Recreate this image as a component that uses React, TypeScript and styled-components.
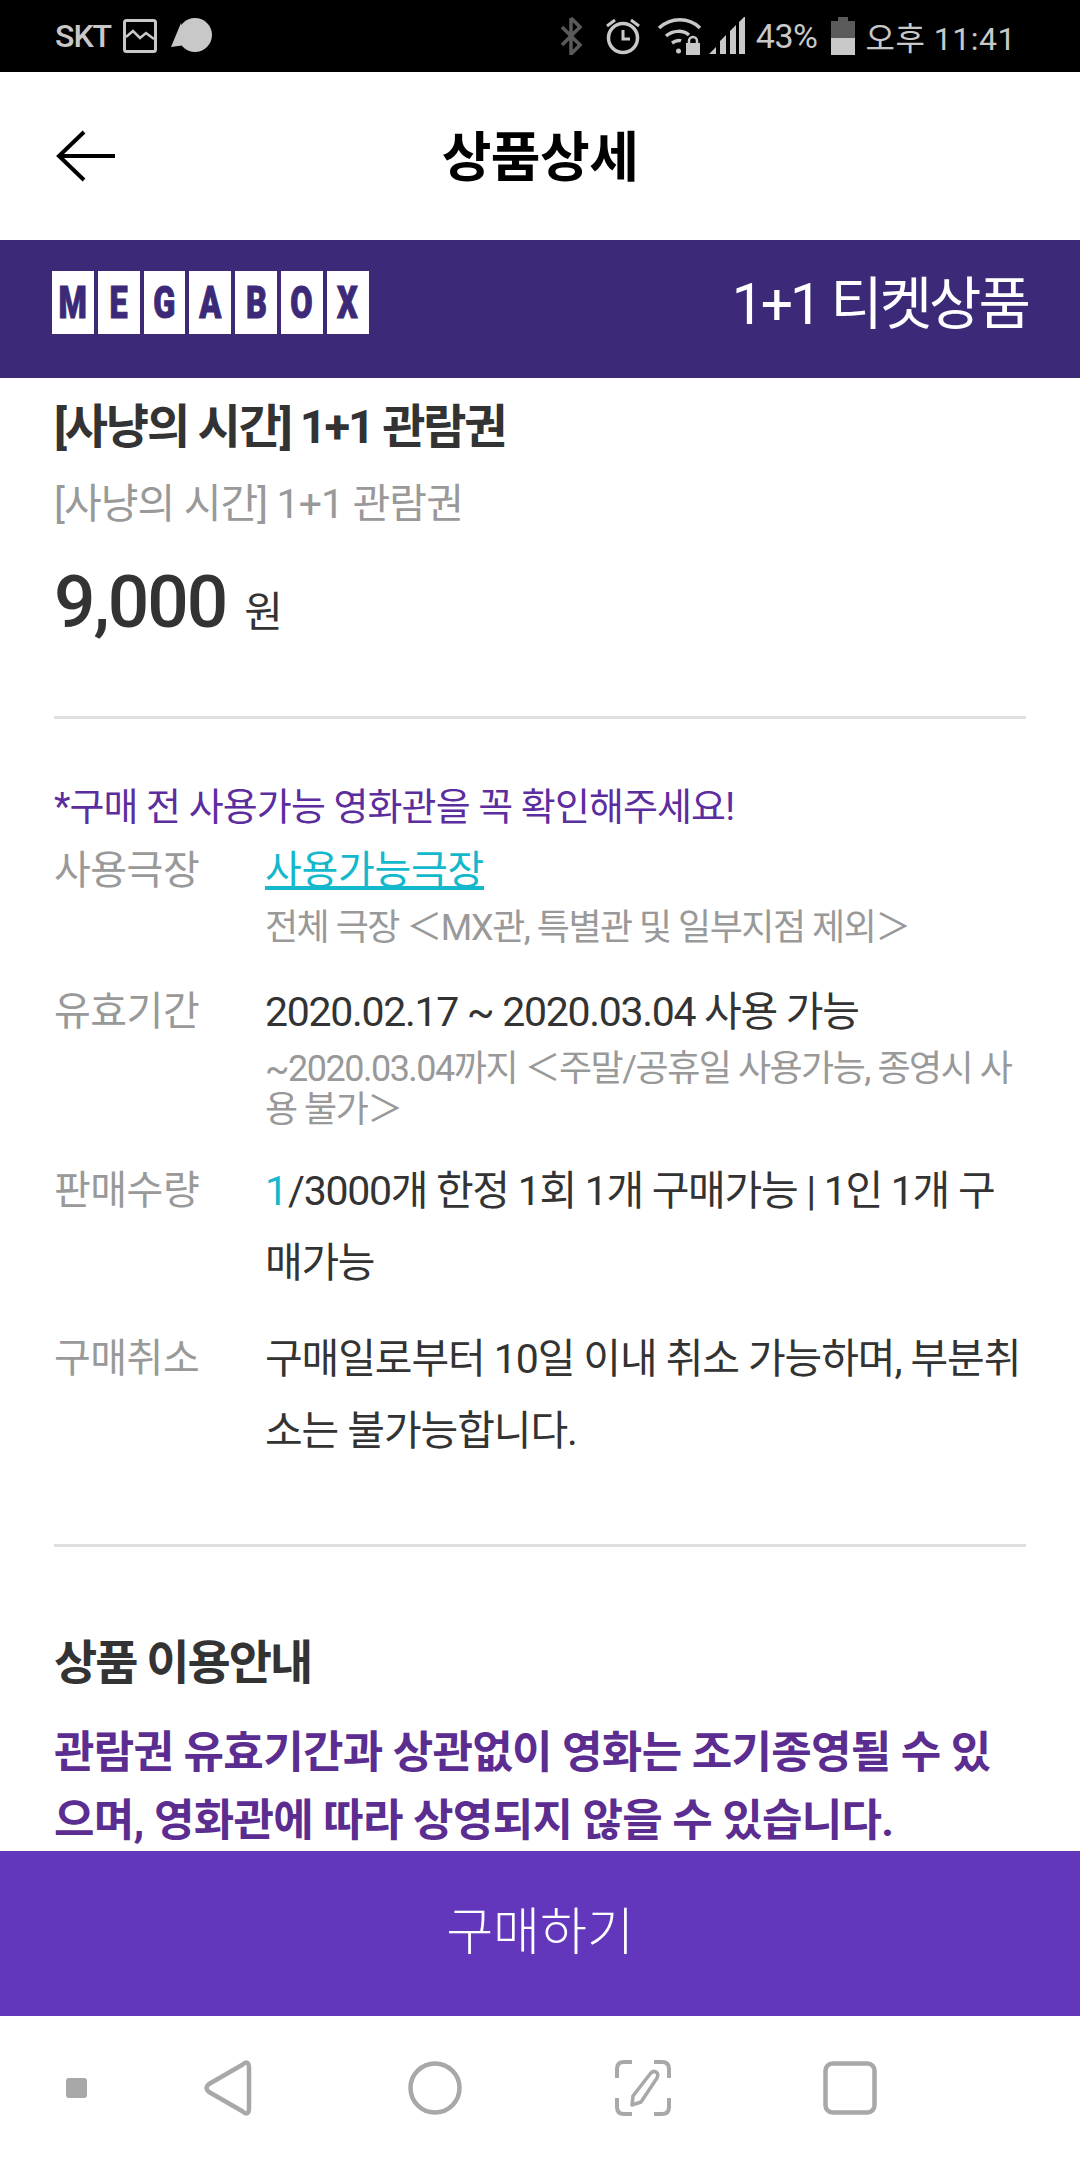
import React from "react";
import styled, { createGlobalStyle } from "styled-components";

const GlobalStyle = createGlobalStyle`
  html, body {
    margin: 0;
    padding: 0;
    background: #fff;
  }
  * {
    box-sizing: border-box;
  }
`;

const fontStack = `Roboto, "Noto Sans CJK KR", sans-serif`;
const logoLetters = ["M", "E", "G", "A", "B", "O", "X"];

function App() {
  return (
    <Screen>
      <GlobalStyle />
      <StatusBar>
        <StatusGroup>
          <StatusText>SKT</StatusText>
          <IconGap $w={12} />
          <svg width="34" height="34" viewBox="0 0 34 34" fill="none" stroke="#c8c8c8">
            <rect x="1.5" y="1.5" width="31" height="31" rx="2" strokeWidth="3" />
            <path d="M3 18l7-6 7 7 6-5 8 6" strokeWidth="2.5" />
          </svg>
          <IconGap $w={14} />
          <svg width="42" height="36" viewBox="0 0 42 36" fill="#c8c8c8">
            <circle cx="24" cy="17" r="17" />
            <path d="M10 5L0 29l15-2z" />
          </svg>
        </StatusGroup>
        <StatusGroup>
          <svg width="24" height="38" viewBox="0 0 24 38" fill="none" stroke="#5a5a5a" strokeWidth="3.5">
            <path d="M12 1v36l9-9L3 10M12 1l9 9L3 28" />
          </svg>
          <IconGap $w={22} />
          <svg width="36" height="38" viewBox="0 0 36 38" fill="none" stroke="#c8c8c8">
            <circle cx="18" cy="21" r="14.5" strokeWidth="3.5" />
            <path d="M18 13v9h7" strokeWidth="3" />
            <path d="M2 9l8-6M34 9l-8-6" strokeWidth="3" />
          </svg>
          <IconGap $w={16} />
          <svg width="44" height="38" viewBox="0 0 44 38" fill="none" stroke="#c8c8c8" strokeWidth="3.5">
            <path d="M2 11c12-11 30-11 41 0" />
            <path d="M9 19c7-6 17-6 23-1" />
            <path d="M15 26c3-2 7-3 9-2" />
            <circle cx="21.500" cy="34" r="2.500" fill="#c8c8c8" stroke="none" />
            <rect x="29" y="26" width="14" height="12" fill="#c8c8c8" stroke="none" />
            <path d="M32 26v-2a4 4 0 0 1 8 0v2" strokeWidth="2.500" />
          </svg>
          <IconGap $w={8} />
          <svg width="36" height="38" viewBox="0 0 36 38" fill="#c8c8c8">
            <path d="M0 37l7-7v7zM11 37V24l6-6v19zM21 37V14l6-6v29zM30 37V5l6-6v38z" />
          </svg>
          <IconGap $w={11} />
          <StatusSmall>43%</StatusSmall>
          <IconGap $w={14} />
          <svg width="24" height="38" viewBox="0 0 24 38">
            <path d="M7 0h10v4h7v17H0V4h7z" fill="#5a5a5a" />
            <rect y="21" width="24" height="17" fill="#c8c8c8" />
          </svg>
          <IconGap $w={10} />
          <StatusClock>오후 11:41</StatusClock>
        </StatusGroup>
      </StatusBar>

      <Header>
        <BackArrow width="60" height="52" viewBox="0 0 60 52" fill="none" stroke="#000" strokeWidth="4">
          <path d="M28 2L3 26l25 24M3 26h56" />
        </BackArrow>
        <HeaderTitle>상품상세</HeaderTitle>
      </Header>

      <Banner>
        <Logo>
          {logoLetters.map((letter) => (
            <LogoCell key={letter}>
              <LogoLetter>{letter}</LogoLetter>
            </LogoCell>
          ))}
        </Logo>
        <BannerText>1+1 티켓상품</BannerText>
      </Banner>

      <Content>
        <ProductName>[사냥의 시간] 1+1 관람권</ProductName>
        <ProductSub>[사냥의 시간] 1+1 관람권</ProductSub>
        <PriceRow>
          <Price>9,000</Price>
          <PriceUnit>원</PriceUnit>
        </PriceRow>
        <Divider />

        <Notice>*구매 전 사용가능 영화관을 꼭 확인해주세요!</Notice>

        <DetailRow $height={141}>
          <DetailLabel>사용극장</DetailLabel>
          <div>
            <TheaterLink>사용가능극장</TheaterLink>
            <DetailNote>전체 극장 ＜MX관, 특별관 및 일부지점 제외＞</DetailNote>
          </div>
        </DetailRow>
        <DetailRow $height={179}>
          <DetailLabel>유효기간</DetailLabel>
          <div>
            <DetailLine $tight>2020.02.17 ~ 2020.03.04 사용 가능</DetailLine>
            <DetailNote>~2020.03.04까지 ＜주말/공휴일 사용가능, 종영시 사용 불가＞</DetailNote>
          </div>
        </DetailRow>
        <DetailRow $height={168}>
          <DetailLabel>판매수량</DetailLabel>
          <div>
            <DetailLine $tight>
              <Accent>1</Accent>/3000개 한정 1회 1개 구매가능 | 1인 1개 구매가능
            </DetailLine>
          </div>
        </DetailRow>
        <DetailRow $height={221}>
          <DetailLabel>구매취소</DetailLabel>
          <div>
            <DetailLine>구매일로부터 10일 이내 취소 가능하며, 부분취소는 불가능합니다.</DetailLine>
          </div>
        </DetailRow>

        <SecondDivider />
        <GuideTitle>상품 이용안내</GuideTitle>
        <GuideText>관람권 유효기간과 상관없이 영화는 조기종영될 수 있으며, 영화관에 따라 상영되지 않을 수 있습니다.</GuideText>
      </Content>

      <BuyButton>구매하기</BuyButton>

      <NavBar>
        <NavDot />
        <svg width="48" height="56" viewBox="0 0 48 56" fill="none" stroke="#a8a8a8" strokeWidth="4.500" strokeLinejoin="round">
          <path d="M38 5 Q45 -1 45 8 V48 Q45 57 38 51 L5 32 Q0 28 5 24 Z" />
        </svg>
        <svg width="54" height="54" viewBox="0 0 54 54" fill="none" stroke="#a8a8a8" strokeWidth="4.500">
          <circle cx="27" cy="27" r="24.500" />
        </svg>
        <svg width="56" height="56" viewBox="0 0 56 56" fill="none" stroke="#a8a8a8" strokeWidth="4">
          <path d="M2 18V9q0-7 7-7h8M39 2h8q7 0 7 7v9M54 38v9q0 7-7 7h-8M17 54H9q-7 0-7-7v-9" />
          <path d="M35 14q3-4 6-2t1 6L26 42l-9 3 1-9z" strokeWidth="3.500" strokeLinejoin="round" />
        </svg>
        <svg width="54" height="54" viewBox="0 0 54 54" fill="none" stroke="#a8a8a8" strokeWidth="4.500">
          <rect x="2.500" y="2.500" width="49" height="49" rx="7" />
        </svg>
      </NavBar>
    </Screen>
  );
}

export default App;

const Screen = styled.div`
  width: 1080px;
  height: 2160px;
  display: flex;
  flex-direction: column;
  overflow: hidden;
  background: #fff;
  font-family: ${fontStack};
`;

const StatusBar = styled.div`
  height: 72px;
  flex-shrink: 0;
  background: #000;
  display: flex;
  justify-content: space-between;
  align-items: center;
  padding: 0 64px 0 55px;
  color: #c8c8c8;
`;

const StatusGroup = styled.div`
  display: flex;
  align-items: center;
`;

const IconGap = styled.span<{ $w: number }>`
  width: ${(p) => p.$w}px;
`;

const StatusText = styled.span`
  font-size: 32px;
  font-weight: 500;
  letter-spacing: -1px;
`;

const StatusSmall = styled.span`
  font-size: 34px;
  letter-spacing: -0.500px;
`;

const StatusClock = styled.span`
  font-size: 32px;
  letter-spacing: 0.500px;
`;

const Header = styled.div`
  height: 168px;
  flex-shrink: 0;
  display: grid;
  grid-template-columns: 1fr auto 1fr;
  align-items: center;
  padding: 0 56px;
  padding-bottom: 6px;
`;

const BackArrow = styled.svg`
  margin-top: 6px;
`;

const HeaderTitle = styled.div`
  font-size: 54px;
  font-weight: 700;
  color: #000;
  letter-spacing: -0.500px;
`;

const Banner = styled.div`
  height: 138px;
  flex-shrink: 0;
  background: #3c2a78;
  display: flex;
  align-items: center;
  justify-content: space-between;
  padding: 0 52px;
`;

const Logo = styled.div`
  display: flex;
  gap: 4px;
  margin-bottom: 13px;
`;

const LogoCell = styled.div`
  width: 41.800px;
  height: 63px;
  background: #fff;
  color: #3c2a78;
  font-family: Roboto, sans-serif;
  font-size: 45px;
  font-weight: 900;
  display: flex;
  align-items: center;
  justify-content: center;
`;

const LogoLetter = styled.span`
  display: inline-block;
  transform: scaleX(0.72);
  -webkit-text-stroke: 1px #3c2a78;
`;

const BannerText = styled.div`
  font-size: 57px;
  font-weight: 400;
  color: #fff;
  letter-spacing: -3px;
  margin-bottom: 20px;
`;

const Content = styled.div`
  flex: 1;
  min-height: 0;
  overflow: hidden;
  padding: 20px 54px 0;
`;

const ProductName = styled.div`
  font-size: 47px;
  font-weight: 700;
  line-height: 58px;
  letter-spacing: -2.200px;
  color: #333;
`;

const ProductSub = styled.div`
  font-size: 41px;
  line-height: 54px;
  margin-top: 21px;
  color: #999;
  letter-spacing: -0.900px;
`;

const PriceRow = styled.div`
  display: flex;
  align-items: baseline;
  gap: 18px;
  margin-top: 28px;
  height: 78px;
`;

const Price = styled.span`
  font-size: 73px;
  font-weight: 500;
  color: #333;
  letter-spacing: -2px;
`;

const PriceUnit = styled.span`
  font-size: 42px;
  color: #333;
`;

const Divider = styled.div`
  height: 3px;
  background: #e0e0e0;
  margin-top: 79px;
`;

const SecondDivider = styled(Divider)`
  margin-top: 0;
`;

const Notice = styled.div`
  font-size: 38px;
  line-height: 48px;
  margin-top: 64px;
  margin-bottom: 4px;
  color: #5c2d9e;
  letter-spacing: -0.900px;
`;

const DetailRow = styled.div<{ $height: number }>`
  display: grid;
  grid-template-columns: 211px 1fr;
  height: ${(p) => p.$height}px;
`;

const DetailLabel = styled.div`
  font-size: 40px;
  line-height: 72px;
  color: #999;
  letter-spacing: -0.500px;
`;

const DetailLine = styled.div<{ $tight?: boolean }>`
  font-size: 41px;
  line-height: 72px;
  color: #333;
  letter-spacing: ${(p) => (p.$tight ? "-1.300px" : "-1.100px")};
  word-break: break-all;
`;

const TheaterLink = styled.div`
  font-size: 40px;
  line-height: 72px;
  color: #14b8cc;
  text-decoration: underline;
  letter-spacing: -0.300px;
`;

const DetailNote = styled.div`
  font-size: 36px;
  line-height: 41px;
  color: #999;
  margin-top: 1px;
  letter-spacing: -1.500px;
  word-break: break-all;
`;

const Accent = styled.span`
  display: inline-block;
  color: #14b8cc;
  letter-spacing: 0;
`;

const GuideTitle = styled.div`
  font-size: 47px;
  font-weight: 700;
  line-height: 60px;
  margin-top: 86px;
  color: #333;
  letter-spacing: -2px;
`;

const GuideText = styled.div`
  font-size: 44px;
  font-weight: 700;
  line-height: 68px;
  margin-top: 26px;
  color: #5c2d91;
  letter-spacing: -0.700px;
  word-break: break-all;
`;

const BuyButton = styled.div`
  height: 165px;
  flex-shrink: 0;
  background: #6237bb;
  color: #fff;
  font-size: 51px;
  font-weight: 300;
  padding-bottom: 12px;
  display: flex;
  align-items: center;
  justify-content: center;
`;

const NavBar = styled.div`
  height: 144px;
  flex-shrink: 0;
  display: grid;
  grid-template-columns: 58px repeat(4, 207.500px);
  align-items: center;
  justify-items: center;
  padding-left: 66px;
`;

const NavDot = styled.span`
  justify-self: start;
  width: 21px;
  height: 20px;
  border-radius: 3px;
  background: #a8a8a8;
`;
